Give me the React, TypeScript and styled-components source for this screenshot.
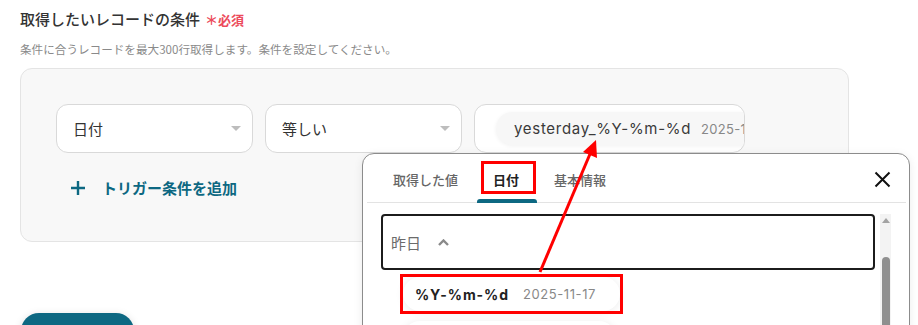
import React from "react";
import styled, { createGlobalStyle, css } from "styled-components";

const TEAL = "#0d6882";
const MARK = "#ff0000";
const LATIN = `"Inter", "Noto Sans CJK JP", sans-serif`;

const Global = createGlobalStyle`
  html, body { margin: 0; padding: 0; background: #fff; overflow: hidden; }
  body { font-family: "Noto Sans CJK JP", "Noto Sans", sans-serif; color: #333; }
  * { box-sizing: border-box; }
`;

const Page = styled.div`
  position: relative;
  width: 918px;
  height: 325px;
  padding: 8px 0 0 20px;
`;

const Heading = styled.h2`
  margin: 0;
  display: flex;
  align-items: baseline;
  gap: 5px;
  font-size: 15px;
  line-height: 22px;
  font-weight: 500;
  color: #333;
`;

const Required = styled.span`
  font-size: 13px;
  font-weight: 700;
  color: #ec4a5b;
`;

const Hint = styled.p`
  margin: 9px 0 0;
  font-size: 11.6px;
  line-height: 18px;
  color: #8a8a8a;
`;

const ConditionBox = styled.div`
  position: relative;
  margin-top: 10px;
  width: 829px;
  height: 174px;
  padding: 35px 0 0 35px;
  background: #f8f8f8;
  border: 1px solid #e4e4e4;
  border-radius: 12px;
`;

const FieldRow = styled.div`
  display: flex;
  gap: 12px;
`;

const Select = styled.div<{ $w: number }>`
  width: ${(p) => p.$w}px;
  height: 49px;
  display: flex;
  align-items: center;
  justify-content: space-between;
  padding: 0 11px 0 16px;
  background: #fff;
  border: 1px solid #d9d9d9;
  border-radius: 12px;
  font-size: 15px;
  color: #333;
`;

const Caret = styled.span`
  width: 0;
  height: 0;
  border-left: 5px solid transparent;
  border-right: 5px solid transparent;
  border-top: 5px solid #bdbdbd;
`;

const ValueField = styled.div`
  width: 271px;
  height: 49px;
  display: flex;
  align-items: center;
  padding-left: 21px;
  overflow: hidden;
  background: #fff;
  border: 1px solid #d9d9d9;
  border-radius: 12px;
`;

const Chip = styled.div`
  flex-shrink: 0;
  height: 33px;
  display: flex;
  align-items: center;
  gap: 10px;
  padding: 0 18px;
  white-space: nowrap;
  background: #f7f7f7;
  border-radius: 17px;
  box-shadow: 0 1px 4px rgba(0, 0, 0, 0.06);
`;

const ChipValue = styled.span`
  font-family: ${LATIN};
  font-size: 15px;
  font-weight: 400;
  color: #3a3a3a;
  letter-spacing: 0.7px;
`;

const ChipDate = styled.span`
  font-family: ${LATIN};
  font-size: 13px;
  color: #888;
  letter-spacing: 0.3px;
`;

const AddButton = styled.div`
  margin: 23px 0 0 14px;
  display: flex;
  align-items: center;
  gap: 16px;
  font-size: 15px;
  line-height: 24px;
  font-weight: 700;
  color: ${TEAL};
`;

const Popover = styled.div`
  position: absolute;
  left: 341px;
  top: 84px;
  width: 548px;
  height: 240px;
  background: #fff;
  border: 1px solid #8c8c8c;
  border-radius: 12px 12px 0 0;
  box-shadow: 0 2px 10px rgba(0, 0, 0, 0.08);
  z-index: 2;
`;

const TabBar = styled.div`
  height: 49px;
  margin: 0 3px 0 4px;
  display: flex;
  align-items: stretch;
  gap: 3px;
  padding: 0 15px 0 10px;
  border-bottom: 1px solid #e3e3e3;
`;

const Tab = styled.div<{ $active?: boolean; $marked?: boolean }>`
  position: relative;
  display: flex;
  align-items: center;
  padding: 3px 16px 0;
  font-size: 13px;
  font-weight: ${(p) => (p.$active ? 600 : 500)};
  color: ${(p) => (p.$active ? "#222" : "#666")};
  ${(p) =>
    p.$active &&
    css`
      &::after {
        content: "";
        position: absolute;
        left: 0;
        right: -2px;
        bottom: -1px;
        height: 4px;
        background: ${TEAL};
        border-radius: 3px 3px 0 0;
      }
    `}
  ${(p) =>
    p.$marked &&
    css`
      &::before {
        content: "";
        position: absolute;
        left: 4px;
        top: 7px;
        width: 49px;
        height: 27px;
        border: 3px solid ${MARK};
      }
    `}
`;

const CloseButton = styled.div`
  margin-left: auto;
  align-self: center;
  margin-top: 3px;
  display: flex;
`;

const PopBody = styled.div`
  display: flex;
  gap: 5px;
  padding: 11px 18px 0 18px;
`;

const List = styled.div`
  flex: 1;
  display: flex;
  flex-direction: column;
  align-items: flex-start;
`;

const Accordion = styled.div`
  align-self: stretch;
  height: 56px;
  display: flex;
  align-items: center;
  gap: 17px;
  padding-left: 8px;
  border: 2px solid #1c1c1c;
  border-radius: 4px;
  font-size: 15px;
  color: #6b6b6b;
`;

const Option = styled.div<{ $marked?: boolean; $gap: number }>`
  position: relative;
  margin: ${(p) => p.$gap}px 0 0 22px;
  height: 34px;
  display: flex;
  align-items: center;
  gap: 14px;
  padding: 0 24px 0 12px;
  background: #fff;
  border-radius: 17px;
  box-shadow: 0 1px 8px rgba(0, 0, 0, 0.08);
  ${(p) =>
    p.$marked &&
    css`
      &::after {
        content: "";
        position: absolute;
        inset: -3px;
        border: 3px solid ${MARK};
      }
    `}
`;

const OptionFormat = styled.span`
  font-family: ${LATIN};
  font-size: 14px;
  font-weight: 700;
  color: #222;
  letter-spacing: 0.9px;
`;

const OptionDate = styled.span`
  font-family: ${LATIN};
  font-size: 13px;
  color: #888;
  letter-spacing: 0.6px;
`;

const ScrollTrack = styled.div`
  width: 11px;
  height: 200px;
  display: flex;
  flex-direction: column;
  align-items: center;
  padding-top: 4px;
  background: #f3f3f3;
`;

const ScrollUp = styled.span`
  width: 0;
  height: 0;
  border-left: 4px solid transparent;
  border-right: 4px solid transparent;
  border-bottom: 5px solid #a3a3a3;
`;

const ScrollThumb = styled.span`
  margin-top: 34px;
  width: 8px;
  flex: 1;
  background: #8f8f8f;
  border-radius: 4px;
`;

const RunButton = styled.div`
  margin: 71px 0 0 1px;
  width: 113px;
  height: 36px;
  display: flex;
  align-items: center;
  justify-content: center;
  background: ${TEAL};
  color: #fff;
  border-radius: 18px;
  font-size: 15px;
  font-weight: 700;
  box-shadow: 0 2px 8px rgba(0, 0, 0, 0.15);
`;

const Annotation = styled.svg`
  position: absolute;
  left: 0;
  top: 0;
  pointer-events: none;
  z-index: 5;
`;

const Plus = () => (
  <svg width="16" height="16" viewBox="0 0 16 16">
    <path d="M8 1v14M1 8h14" stroke={TEAL} strokeWidth="2.4" fill="none" />
  </svg>
);

const CloseIcon = () => (
  <svg width="17" height="17" viewBox="0 0 17 17">
    <path d="M1.5 1.5l14 14M15.5 1.5l-14 14" stroke="#111" strokeWidth="2" fill="none" />
  </svg>
);

const ChevronUp = () => (
  <svg width="11" height="7" viewBox="0 0 11 7">
    <path d="M1 6l4.5-4.5L10 6" stroke="#8a8a8a" strokeWidth="2.4" fill="none" />
  </svg>
);

export default function App() {
  return (
    <>
      <Global />
      <Page>
        <Heading>
          取得したいレコードの条件<Required>＊必須</Required>
        </Heading>
        <Hint>条件に合うレコードを最大300行取得します。条件を設定してください。</Hint>
        <ConditionBox>
          <FieldRow>
            <Select $w={197}>
              日付
              <Caret />
            </Select>
            <Select $w={197}>
              等しい
              <Caret />
            </Select>
            <ValueField>
              <Chip>
                <ChipValue>yesterday_%Y-%m-%d</ChipValue>
                <ChipDate>2025-11-17</ChipDate>
              </Chip>
            </ValueField>
          </FieldRow>
          <AddButton>
            <Plus />
            トリガー条件を追加
          </AddButton>
          <Popover>
            <TabBar>
              <Tab>取得した値</Tab>
              <Tab $active $marked>
                日付
              </Tab>
              <Tab>基本情報</Tab>
              <CloseButton>
                <CloseIcon />
              </CloseButton>
            </TabBar>
            <PopBody>
              <List>
                <Accordion>
                  昨日
                  <ChevronUp />
                </Accordion>
                <Option $marked $gap={7}>
                  <OptionFormat>%Y-%m-%d</OptionFormat>
                  <OptionDate>2025-11-17</OptionDate>
                </Option>
                <Option $gap={10}>
                  <OptionFormat>%Y/%m/%d</OptionFormat>
                  <OptionDate>2025/11/17</OptionDate>
                </Option>
              </List>
              <ScrollTrack>
                <ScrollUp />
                <ScrollThumb />
              </ScrollTrack>
            </PopBody>
          </Popover>
        </ConditionBox>
        <RunButton>テスト</RunButton>
        <Annotation width="918" height="325" viewBox="0 0 918 325">
          <line x1="540" y1="272" x2="590" y2="154" stroke={MARK} strokeWidth="3" />
          <polygon points="596,140 583,152 597,158" fill={MARK} />
        </Annotation>
      </Page>
    </>
  );
}
